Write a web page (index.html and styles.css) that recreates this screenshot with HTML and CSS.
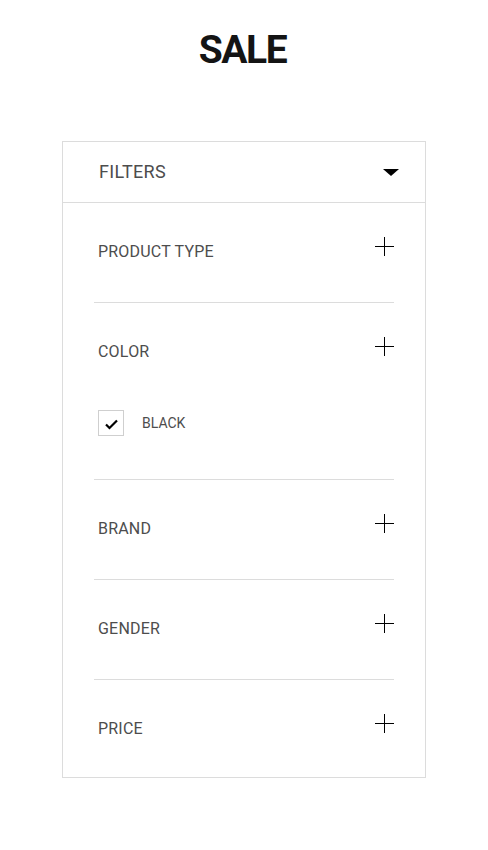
FILE: index.html
```html
<!DOCTYPE html>
<html lang="en">
<head>
<meta charset="utf-8">
<title>Sale</title>
<link rel="stylesheet" href="styles.css">
</head>
<body>
<main class="page">
  <h1 class="title">SALE</h1>
  <section class="filters">
    <div class="filters-head">
      <span class="filters-label">FILTERS</span>
      <svg class="caret" width="16" height="7" viewBox="0 0 16 7"><path d="M0 0H16L8 7Z" fill="#000"/></svg>
    </div>
    <div class="filters-body">
      <div class="group">
        <div class="group-head">
          <span class="group-label">PRODUCT TYPE</span>
          <svg class="plus" width="19" height="19" viewBox="0 0 19 19"><path d="M0 9.5H19M9.5 0V19" stroke="#000" stroke-width="1"/></svg>
        </div>
      </div>
      <div class="group">
        <div class="group-head">
          <span class="group-label">COLOR</span>
          <svg class="plus" width="19" height="19" viewBox="0 0 19 19"><path d="M0 9.5H19M9.5 0V19" stroke="#000" stroke-width="1"/></svg>
        </div>
        <ul class="options">
          <li class="option">
            <span class="checkbox">
              <svg width="24" height="24" viewBox="0 0 24 24"><path d="M7 13.5L10.5 17L18 9.5" fill="none" stroke="#000" stroke-width="2.2"/></svg>
            </span>
            <span class="option-label">BLACK</span>
          </li>
        </ul>
      </div>
      <div class="group">
        <div class="group-head">
          <span class="group-label">BRAND</span>
          <svg class="plus" width="19" height="19" viewBox="0 0 19 19"><path d="M0 9.5H19M9.5 0V19" stroke="#000" stroke-width="1"/></svg>
        </div>
      </div>
      <div class="group">
        <div class="group-head">
          <span class="group-label">GENDER</span>
          <svg class="plus" width="19" height="19" viewBox="0 0 19 19"><path d="M0 9.5H19M9.5 0V19" stroke="#000" stroke-width="1"/></svg>
        </div>
      </div>
      <div class="group last">
        <div class="group-head">
          <span class="group-label">PRICE</span>
          <svg class="plus" width="19" height="19" viewBox="0 0 19 19"><path d="M0 9.5H19M9.5 0V19" stroke="#000" stroke-width="1"/></svg>
        </div>
      </div>
    </div>
  </section>
</main>
</body>
</html>
```

FILE: styles.css
```css
* { box-sizing: border-box; }
html, body { margin: 0; padding: 0; background: #fff; }
body { font-family: Roboto, "Liberation Sans", sans-serif; color: #4d4d4d; }

.page { padding-top: 26px; }

.title {
  margin: 0;
  padding-right: 3px;
  text-align: center;
  font-size: 39px;
  line-height: 48px;
  font-weight: 700;
  letter-spacing: -1.5px;
  color: #141414;
}

.filters {
  width: 364px;
  margin: 67px auto 0;
  border: 1px solid #dcdcdc;
}

.filters-head {
  height: 61px;
  border-bottom: 1px solid #dcdcdc;
  display: flex;
  align-items: center;
  justify-content: space-between;
  padding: 0 26px 0 36px;
}
.filters-label { font-size: 18px; line-height: 22px; letter-spacing: 0.3px; }
.caret { display: block; margin-top: 1px; }

.filters-body { padding: 0 31px; }

.group {
  padding: 39px 0 40px 4px;
  border-bottom: 1px solid #dcdcdc;
}
.group.last { border-bottom: none; padding-bottom: 38px; }

.group-head {
  display: flex;
  justify-content: space-between;
  align-items: flex-start;
}
.group-label { font-size: 16px; line-height: 20px; letter-spacing: 0.2px; }
.plus { display: block; margin-top: -5px; }

.options { list-style: none; margin: 48px 0 3px; padding: 0; }
.option { display: flex; align-items: center; gap: 18px; }
.checkbox {
  width: 26px; height: 26px;
  border: 1px solid #cfcfcf;
  display: flex; align-items: center; justify-content: center;
}
.checkbox svg { display: block; }
.option-label { font-size: 14px; line-height: 18px; }
```
